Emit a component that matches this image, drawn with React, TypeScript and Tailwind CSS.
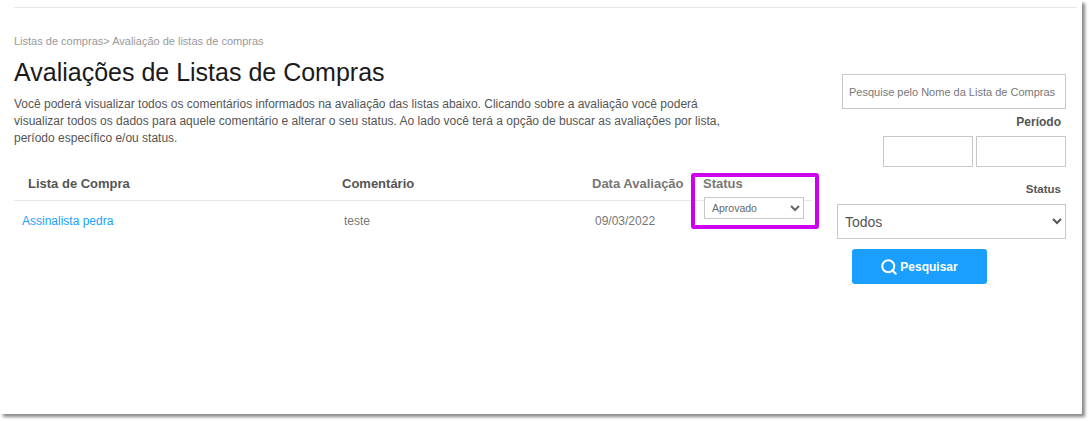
import { Search } from "lucide-react";

const font = "font-['Liberation_Sans',Arial,sans-serif]";

export default function App() {
  return (
    <div className={`h-[421px] w-[1089px] overflow-hidden bg-white ${font}`}>
      <div className="relative h-[414px] w-[1082px] bg-white pl-[14px] pr-[5px] pt-[7px] shadow-[3px_3px_3px_#8a8a8a]">
        <div className="h-px bg-[#e8e8e8]" />
        <div className="flex">
          <main className="w-[798px] shrink-0">
            <p className="mt-[26px] text-[11px] leading-[14px] text-[#999999]">
              Listas de compras&gt; Avaliação de listas de compras
            </p>
            <h1 className="mt-[9px] text-[25px] leading-[30px] text-[#1a1a1a]">
              Avaliações de Listas de Compras
            </h1>
            <p className="mt-[9px] w-[720px] text-[12px] leading-[17px] text-[#555555]">
              Você poderá visualizar todos os comentários informados na avaliação das listas abaixo. Clicando sobre a avaliação você poderá visualizar todos os dados para aquele comentário e alterar o seu status. Ao lado você terá a opção de buscar as avaliações por lista, período específico e/ou status.
            </p>
            <div className="mt-[19px] grid h-[35px] grid-cols-[328px_250px_111px_109px] items-center border-b border-[#e8e8e8] pt-[2px] text-[13px] font-bold text-[#555555]">
              <span className="pl-[14px]">Lista de Compra</span>
              <span>Comentário</span>
              <span className="text-[#777777]">Data Avaliação</span>
              <span className="text-[#777777]">Status</span>
            </div>
            <div className="grid h-[40px] grid-cols-[330px_251px_109px_108px] items-center text-[12px] text-[#777777]">
              <a className="pl-[8px] text-[#1a9fff]" href="#">Assinalista pedra</a>
              <span>teste</span>
              <span>09/03/2022</span>
              <select className="-mt-[4px] h-[22px] w-[100px] self-start border border-[#c8c8c8] bg-white pl-[3px] text-[10.5px] text-[#666666]" defaultValue="Aprovado">
                <option>Aprovado</option>
              </select>
            </div>
          </main>

          <aside className="ml-[25px] flex w-[229px] flex-col">
            <input
              className="ml-[5px] mt-[66px] h-[35px] w-[224px] border border-[#c8c8c8] px-[6px] text-[11px] placeholder:text-[#777777]"
              placeholder="Pesquise pelo Nome da Lista de Compras"
            />
            <label className="mt-[6px] pr-[5px] text-right text-[12px] font-bold leading-[14px] text-[#555555]">Período</label>
            <div className="mt-[7px] flex justify-end gap-[3px]">
              <input className="h-[31px] w-[90px] border border-[#c8c8c8]" />
              <input className="h-[31px] w-[90px] border border-[#c8c8c8]" />
            </div>
            <label className="mt-[15px] pr-[5px] text-right text-[11.5px] font-bold leading-[14px] text-[#555555]">Status</label>
            <select className="mt-[8px] h-[35px] w-[229px] border border-[#c8c8c8] bg-white pl-[3px] text-[14px] text-[#555555]" defaultValue="Todos">
              <option>Todos</option>
            </select>
            <button className="ml-[15px] mt-[10px] flex h-[35px] w-[135px] items-center justify-center gap-[2px] rounded-[3px] bg-[#1a9fff] pr-[1px] text-[12px] font-bold text-white">
              <Search size={18} strokeWidth={2.75} />
              Pesquisar
            </button>
          </aside>
        </div>
        <div className="absolute left-[691px] top-[173px] h-[56px] w-[128px] rounded-[3px] border-[4px] border-[#cc00ee]" />
      </div>
    </div>
  );
}
